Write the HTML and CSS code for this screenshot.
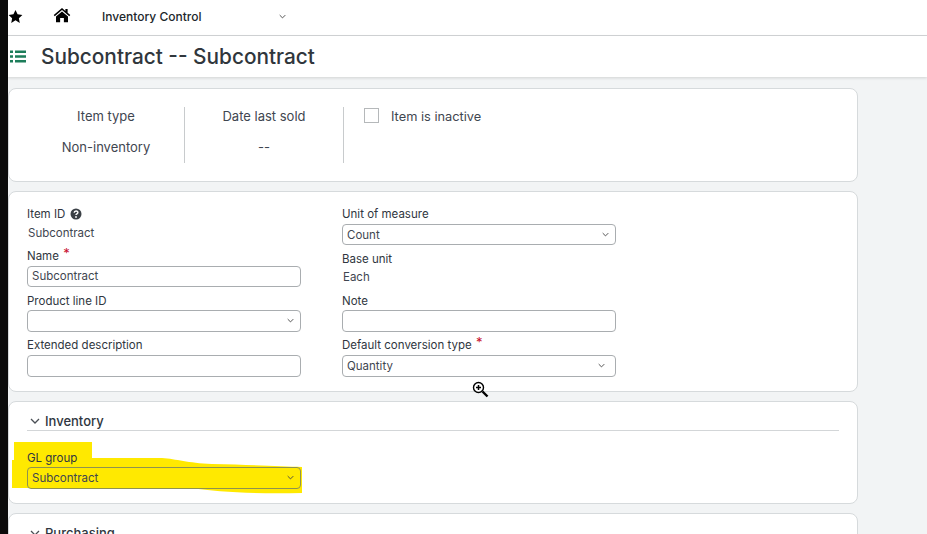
FILE: index.html
```html
<!DOCTYPE html>
<html lang="en">
<head>
<meta charset="utf-8">
<title>Subcontract -- Subcontract</title>
<link rel="stylesheet" href="styles.css">
</head>
<body>
<div class="app">
  <div class="strip"></div>
  <div class="main">
    <header class="topbar">
      <svg class="star" viewBox="0 0 24 24"><path d="M12 1.500l3.300 7 7.700 1-5.600 5.300 1.400 7.700L12 18l-6.800 4.500 1.400-7.700L1 9.500l7.700-1z"/></svg>
      <svg class="home" viewBox="0 0 24 20"><path d="M12 0.800L1 10l1.300 1.500L12 3.400l9.700 8.100L23 10l-3.500-2.900V2h-3v2.600z"/><path d="M12 5.200L4 11.900V19.500h5.500v-5.500h5v5.500H20V11.900z"/></svg>
      <span class="module">Inventory Control</span>
      <svg class="chev chev-top" viewBox="0 0 10 6"><path d="M1 1l4 4 4-4"/></svg>
    </header>
    <div class="titlebar">
      <svg class="list" viewBox="0 0 16 13"><path d="M0 0.500h3v2.400H0zM5 0.500h11v2.400H5zM0 5.300h3v2.400H0zM5 5.300h11v2.400H5zM0 10.100h3v2.400H0zM5 10.100h11v2.400H5z"/></svg>
      <h1>Subcontract -- Subcontract</h1>
    </div>
    <main class="content">
      <section class="card summary">
        <div class="stat stat-type"><span>Item type</span><span>Non-inventory</span></div>
        <div class="stat stat-date"><span>Date last sold</span><span>--</span></div>
        <label class="inactive"><span class="checkbox"></span><span class="inactive-text">Item is inactive</span></label>
      </section>

      <section class="card details">
        <div class="col">
          <div class="lbl">Item ID <svg class="help" viewBox="0 0 12 12"><circle cx="6" cy="6" r="5.500"/><path class="q" d="M4.200 4.700c0-2.200 3.700-2.300 3.700-.2 0 1.400-1.900 1.300-1.900 2.600"/><circle class="dot" cx="6" cy="9" r=".9"/></svg></div>
          <div class="val">Subcontract</div>
          <div class="lbl lbl-name">Name <span class="req">*</span></div>
          <div class="box box-short">Subcontract</div>
          <div class="lbl lbl-prod">Product line ID</div>
          <div class="box sel"><svg class="chev" viewBox="0 0 10 6"><path d="M1 1l4 4 4-4"/></svg></div>
          <div class="lbl lbl-next">Extended description</div>
          <div class="box"></div>
        </div>
        <div class="col">
          <div class="lbl">Unit of measure</div>
          <div class="box sel box-uom">Count<svg class="chev" viewBox="0 0 10 6"><path d="M1 1l4 4 4-4"/></svg></div>
          <div class="lbl lbl-base">Base unit</div>
          <div class="val val-each">Each</div>
          <div class="lbl lbl-note">Note</div>
          <div class="box"></div>
          <div class="lbl lbl-next">Default conversion type <span class="req">*</span></div>
          <div class="box sel">Quantity<svg class="chev chev-qty" viewBox="0 0 10 6"><path d="M1 1l4 4 4-4"/></svg></div>
        </div>
        <svg class="zoomcursor" viewBox="0 0 17 17"><circle cx="6.500" cy="6.500" r="5" fill="#fff" stroke="#000" stroke-width="1.400"/><path d="M4 6.500h5M6.500 4v5" stroke="#000" stroke-width="1.500"/><path d="M10.500 10.500l5 5" stroke="#000" stroke-width="2.400"/></svg>
      </section>

      <section class="card inventory">
        <h2 class="sect"><svg class="chev chev-sect" viewBox="0 0 10 6"><path d="M1 1l4 4 4-4"/></svg>Inventory</h2>
        <svg class="marker" viewBox="0 0 290 52"><path d="M2 0H80V16H150C165 17 175 21 200 22C240 23 270 24 290 25V51C240 52 205 50 180 46H0V18H2z"/></svg>
        <div class="gl">
          <div class="lbl">GL group</div>
          <div class="box sel box-clear">Subcontract<svg class="chev" viewBox="0 0 10 6"><path d="M1 1l4 4 4-4"/></svg></div>
        </div>
      </section>

      <section class="card purchasing">
        <h2 class="sect"><svg class="chev chev-sect" viewBox="0 0 10 6"><path d="M1 1l4 4 4-4"/></svg>Purchasing</h2>
      </section>
    </main>
  </div>
</div>
</body>
</html>
```

FILE: styles.css
```css
* { box-sizing: border-box; }
html, body { margin: 0; height: 100%; overflow: hidden; }
body { font-family: Inter, "Liberation Sans", sans-serif; color: #333a42; background: #f2f4f5; }
.app { display: flex; height: 534px; }
.strip { width: 8px; flex: none; background: #0b0b0b; }
.main { flex: 1; min-width: 0; display: flex; flex-direction: column; }

.topbar { height: 36px; flex: none; background: #fff; border-bottom: 1px solid #d3d6d8; display: flex; align-items: center; }
.star { width: 15px; height: 15px; margin: 0 0 3px 0; flex: none; }
.home { width: 18px; height: 16px; margin: -6px 0 0 30px; flex: none; }
.module { font-size: 12px; font-weight: 500; color: #22272c; margin: -2px 0 0 31px; width: 177px; }
.chev { fill: none; stroke: #444; stroke-width: 1.300; width: 7px; height: 5px; flex: none; }
.chev-top { margin-top: -3px; }

.titlebar { height: 41px; flex: none; background: #fff; display: flex; align-items: center; box-shadow: 0 1px 3px rgba(0,0,0,.14); position: relative; padding-left: 2px; }
.list { width: 16px; height: 13px; fill: #1d7d5a; flex: none; }
.titlebar h1 { margin: 2px 0 0 15px; font-size: 20.800px; font-weight: 500; color: #30363c; line-height: 1; }

.content { flex: 1; min-height: 0; padding-top: 11px; display: flex; flex-direction: column; gap: 9px; }
.card { width: 850px; flex: none; background: #fff; border: 1px solid #d6dadc; border-radius: 8px; position: relative; }

.summary { height: 94px; display: flex; }
.stat { height: 56px; margin-top: 18px; display: flex; flex-direction: column; align-items: center; gap: 15px; font-size: 13px; line-height: 16px; padding-top: 1px; color: #3f4650; }
.stat-type { width: 176px; padding-left: 19px; border-right: 1px solid #c8cbcd; }
.stat-date { width: 159px; border-right: 1px solid #c8cbcd; }
.inactive { display: flex; gap: 12px; margin: 18px 0 0 20px; font-size: 12.800px; line-height: 16px; color: #3f4650; padding-top: 1px; }
.inactive-text { margin-top: 1px; }
.checkbox { width: 15px; height: 15px; border: 1px solid #b5b8ba; background: #fff; }

.details { height: 201px; padding: 14px 0 0 18px; display: flex; gap: 41px; }
.col { width: 274px; }
.lbl { font-size: 11.500px; height: 14px; line-height: 16px; color: #2f3640; }
.val { font-size: 11.500px; line-height: 14px; margin-top: 6px; color: #3f4650; padding-left: 1px; }
.lbl-name { margin-top: 9px; margin-bottom: 3px; line-height: 14px; }
.lbl-prod { margin-top: 6px; margin-bottom: 3px; }
.lbl-next { margin-top: 5px; margin-bottom: 4px; }
.lbl-base { margin-top: 6px; }
.val-each { margin-top: 5px; }
.lbl-note { margin-top: 9px; margin-bottom: 3px; }
.help { width: 12px; height: 12px; vertical-align: -2px; margin-left: 1px; fill: #3b4046; }
.help .q { fill: none; stroke: #fff; stroke-width: 1.400; }
.help .dot { fill: #fff; }
.req { color: #c8102e; font-size: 13px; line-height: 0; position: relative; top: -2px; margin-left: 1px; }
.box { height: 22px; border: 1px solid #a9adb0; border-radius: 4px; background: #fff; font-size: 11.500px; line-height: 19px; padding: 0 4px; color: #3f4650; }
.box-short { height: 21px; }
.sel { display: flex; align-items: center; padding-right: 6px; }
.sel .chev { margin-left: auto; margin-top: -2px; }
.box-uom { margin-top: 4px; height: 21px; padding-top: 1px; }
.chev-qty { position: relative; left: -4px; }
.zoomcursor { position: absolute; left: 463px; top: 189px; width: 17px; height: 17px; }

.inventory { height: 103px; padding: 11px 18px 0; }
.sect { margin: 0; font-size: 13px; font-weight: 500; line-height: 16px; color: #2f3640; display: flex; align-items: center; gap: 5px; padding: 0 0 2px 3px; border-bottom: 1px solid #d3d6d8; height: 18px; }
.chev-sect { width: 10px; height: 6px; stroke: #4a4f55; }
.marker { position: absolute; left: 3px; top: 40px; width: 290px; height: 52px; fill: #ffe900; }
.gl { position: relative; width: 274px; margin-top: 20px; }
.gl .lbl { margin-bottom: 2px; line-height: 15px; }
.box-clear { background: transparent; border-color: #8f9250; }
.purchasing { height: 60px; padding: 11px 18px 0; }
.purchasing .sect { border-bottom: 0; }
```
